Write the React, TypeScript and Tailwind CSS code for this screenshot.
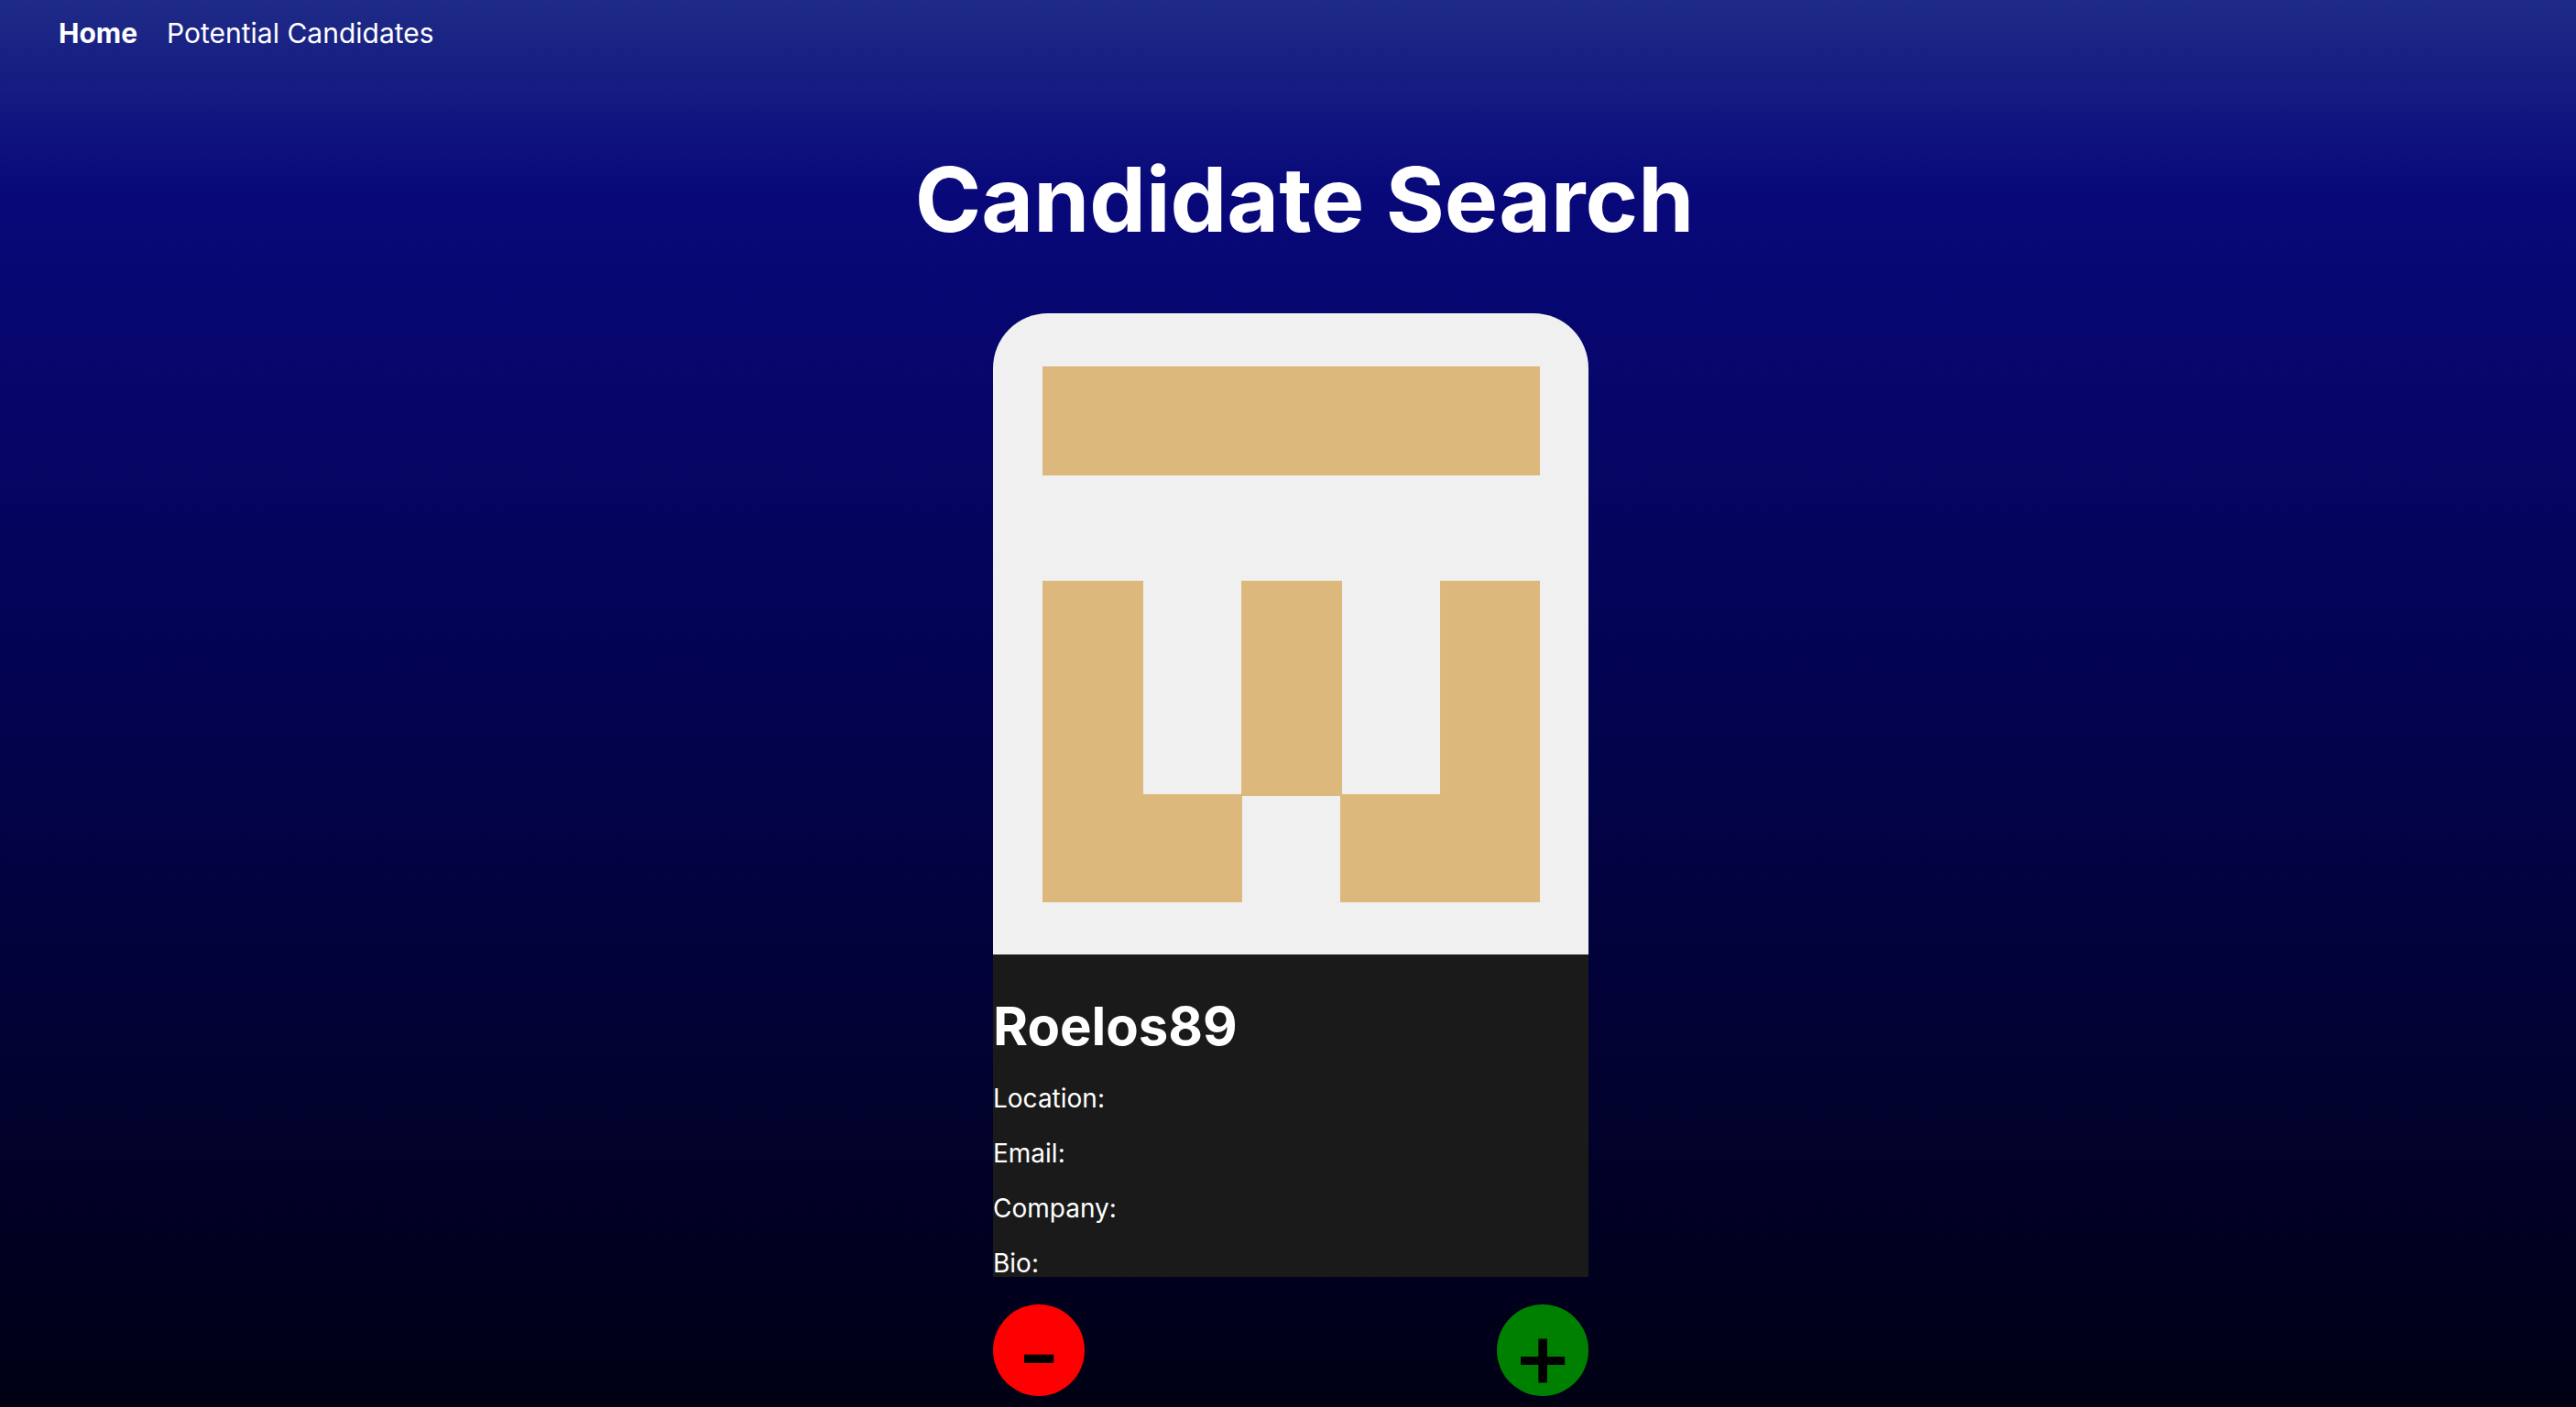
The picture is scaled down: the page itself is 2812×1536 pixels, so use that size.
const CELL = 70;

// Filled cells of the 5x5 identicon, as [column, row].
const CELLS: [number, number][] = [
  [0, 0], [1, 0], [2, 0], [3, 0], [4, 0],
  [0, 2], [2, 2], [4, 2],
  [0, 3], [2, 3], [4, 3],
  [0, 4], [1, 4], [3, 4], [4, 4],
];

const FIELDS = ["Location:", "Email:", "Company:", "Bio:"];

function Nav() {
  return (
    <nav className="flex gap-8 px-16 pt-4 text-[30px] leading-10">
      <a href="#" className="font-bold">Home</a>
      <a href="#">Potential Candidates</a>
    </nav>
  );
}

function Avatar() {
  return (
    <svg
      viewBox="0 0 420 420"
      preserveAspectRatio="none"
      role="img"
      aria-label="Avatar"
      shapeRendering="crispEdges"
      className="block h-[700px] w-full rounded-t-[60px] bg-[#f0f0f0]"
    >
      {CELLS.map(([col, row]) => (
        <rect
          key={`${col}-${row}`}
          x={35 + col * CELL}
          y={35 + row * CELL}
          width={CELL + 1}
          height={CELL + 1}
          fill="#dcb87c"
        />
      ))}
    </svg>
  );
}

export default function App() {
  return (
    <div className="min-h-screen bg-[linear-gradient(180deg,#1f2b87_0%,#08087a_14%,#030350_50%,#000014_100%)] font-['Inter',sans-serif] text-white">
      <Nav />
      <main className="flex flex-col items-center">
        <h1 className="mt-[100px] pl-9 text-[98px] leading-[124px] font-bold">Candidate Search</h1>
        <div className="w-full max-w-[656px] pt-[62px] pl-1.5">
          <article>
            <Avatar />
            <div className="bg-[#1a1a1a] pt-10">
              <h2 className="text-[58px] leading-[76px] font-bold">Roelos89</h2>
              <dl className="mt-[26px] flex flex-col gap-[30px] text-[28px] leading-[30px]">
                {FIELDS.map((label) => (
                  <dt key={label}>{label}</dt>
                ))}
              </dl>
            </div>
          </article>
          <div className="mt-[30px] flex justify-between text-[100px] leading-none font-medium text-black">
            <button type="button" aria-label="Reject" className="flex size-[100px] items-center justify-center rounded-full bg-[#ff0000] pt-2">-</button>
            <button type="button" aria-label="Accept" className="flex size-[100px] items-center justify-center rounded-full bg-[#008000] pt-2">+</button>
          </div>
        </div>
      </main>
    </div>
  );
}
